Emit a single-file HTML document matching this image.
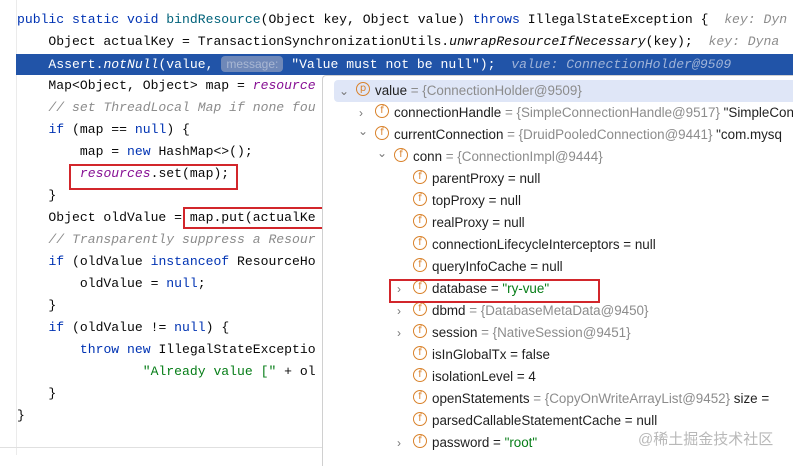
<!DOCTYPE html>
<html><head><meta charset="utf-8"><style>
body{margin:0;width:793px;height:455px;overflow:hidden;background:#fff;position:relative;font-family:"Liberation Mono",monospace}
.l{position:absolute;left:17px;height:22px;line-height:22px;font-size:13.1px;white-space:pre;color:#080808}
.k{color:#0033b3}.i{font-style:italic}.c{color:#8c8c8c;font-style:italic}.s{color:#067d17}.f{color:#871094;font-style:italic}
.h{color:#8c8c8c;font-style:italic}
.bar{position:absolute;left:16px;top:54px;width:777px;height:21px;background:#2154a8}
.box{position:absolute;border:2px solid #d2262b}
.pop{position:absolute;left:322px;top:75px;width:480px;height:390px;background:#fff;border-left:1px solid #d0d0d0;border-top:1px solid #d0d0d0;border-radius:4px 0 0 0;font-family:"Liberation Sans",sans-serif;font-size:13.4px;color:#1f1f1f}
.r{position:absolute;height:22px;line-height:22px;white-space:nowrap}
.ic{display:inline-block;box-sizing:border-box;width:14px;height:14px;border:1.3px solid #d9822b;border-radius:50%;color:#d9822b;font-family:"DejaVu Sans",sans-serif;font-size:10px;line-height:12px;text-align:center;vertical-align:middle;position:relative;top:-2px;margin-right:5px}
.g{color:#8c8c8c}.gs{color:#067d17}
.ar{position:absolute;color:#777;font-size:12px;height:22px;line-height:22px}
</style></head><body>
<div style="position:absolute;left:16px;top:0;width:1px;height:455px;background:#ebebeb"></div>
<div class="bar"></div>
<div class="l" style="top:9px"><span class="k">public static void</span> <span style="color:#00627a">bindResource</span>(Object key, Object value) <span class="k">throws</span> IllegalStateException {  <span class="h">key: Dyn</span></div>
<div class="l" style="top:31px">    Object actualKey = TransactionSynchronizationUtils.<span class="i">unwrapResourceIfNecessary</span>(key);  <span class="h">key: Dyna</span></div>
<div class="l" style="top:53px;color:#fff">    Assert.<span class="i">notNull</span>(value, <span style="background:#6f88b8;color:#a9b7d3;border-radius:4px;font-family:'Liberation Sans',sans-serif;font-size:12px;padding:1px 5px">message:</span> "Value must not be null");  <span class="i" style="color:#9fb3d8">value: ConnectionHolder@9509</span></div>
<div class="l" style="top:75px">    Map&lt;Object, Object&gt; map = <span class="f">resource</span></div>
<div class="l" style="top:97px"><span class="c">    // set ThreadLocal Map if none fou</span></div>
<div class="l" style="top:119px">    <span class="k">if</span> (map == <span class="k">null</span>) {</div>
<div class="l" style="top:141px">        map = <span class="k">new</span> HashMap&lt;&gt;();</div>
<div class="l" style="top:163px">        <span class="f">resources</span>.set(map);</div>
<div class="l" style="top:185px">    }</div>
<div class="l" style="top:207px">    Object oldValue = map.put(actualKe</div>
<div class="l" style="top:229px"><span class="c">    // Transparently suppress a Resour</span></div>
<div class="l" style="top:251px">    <span class="k">if</span> (oldValue <span class="k">instanceof</span> ResourceHo</div>
<div class="l" style="top:273px">        oldValue = <span class="k">null</span>;</div>
<div class="l" style="top:295px">    }</div>
<div class="l" style="top:317px">    <span class="k">if</span> (oldValue != <span class="k">null</span>) {</div>
<div class="l" style="top:339px">        <span class="k">throw new</span> IllegalStateExceptio</div>
<div class="l" style="top:361px">                <span class="s">"Already value ["</span> + ol</div>
<div class="l" style="top:383px">    }</div>
<div class="l" style="top:405px">}</div>
<div style="position:absolute;left:0;top:447px;width:322px;height:1px;background:#e0e0e0"></div>
<div class="box" style="left:69px;top:164px;width:165px;height:22px"></div>
<div class="box" style="left:183px;top:207px;width:146px;height:18px;border-right:none"></div>

<div class="pop">
<div style="position:absolute;left:11px;top:4px;width:470px;height:22px;background:#dfe6f7;border-radius:4px"></div>
<div class="ar" style="left:16px;top:4px">&#8964;</div>
<div class="r" style="left:33px;top:4px"><span class="ic">p</span>value <span class="g">= {ConnectionHolder@9509}</span></div>
<div class="ar" style="left:36px;top:26px">&#8250;</div>
<div class="r" style="left:52px;top:26px"><span class="ic">f</span>connectionHandle <span class="g">= {SimpleConnectionHandle@9517}</span> "SimpleCon</div>
<div class="ar" style="left:35px;top:44px">&#8964;</div>
<div class="r" style="left:52px;top:48px"><span class="ic">f</span>currentConnection <span class="g">= {DruidPooledConnection@9441}</span> "com.mysq</div>
<div class="ar" style="left:54px;top:66px">&#8964;</div>
<div class="r" style="left:71px;top:70px"><span class="ic">f</span>conn <span class="g">= {ConnectionImpl@9444}</span></div>
<div class="r" style="left:90px;top:92px"><span class="ic">f</span>parentProxy = null</div>
<div class="r" style="left:90px;top:114px"><span class="ic">f</span>topProxy = null</div>
<div class="r" style="left:90px;top:136px"><span class="ic">f</span>realProxy = null</div>
<div class="r" style="left:90px;top:158px"><span class="ic">f</span>connectionLifecycleInterceptors = null</div>
<div class="r" style="left:90px;top:180px"><span class="ic">f</span>queryInfoCache = null</div>
<div class="ar" style="left:74px;top:202px">&#8250;</div>
<div class="r" style="left:90px;top:202px"><span class="ic">f</span>database = <span class="gs">"ry-vue"</span></div>
<div class="ar" style="left:74px;top:224px">&#8250;</div>
<div class="r" style="left:90px;top:224px"><span class="ic">f</span>dbmd <span class="g">= {DatabaseMetaData@9450}</span></div>
<div class="ar" style="left:74px;top:246px">&#8250;</div>
<div class="r" style="left:90px;top:246px"><span class="ic">f</span>session <span class="g">= {NativeSession@9451}</span></div>
<div class="r" style="left:90px;top:268px"><span class="ic">f</span>isInGlobalTx = false</div>
<div class="r" style="left:90px;top:290px"><span class="ic">f</span>isolationLevel = 4</div>
<div class="r" style="left:90px;top:312px"><span class="ic">f</span>openStatements <span class="g">= {CopyOnWriteArrayList@9452}</span>  size =</div>
<div class="r" style="left:90px;top:334px"><span class="ic">f</span>parsedCallableStatementCache = null</div>
<div class="ar" style="left:74px;top:356px">&#8250;</div>
<div class="r" style="left:90px;top:356px"><span class="ic">f</span>password = <span class="gs">"root"</span></div>
</div>
<div class="box" style="left:389px;top:279px;width:207px;height:20px"></div>
<div style="position:absolute;left:638px;top:428px;font-family:'Liberation Sans','Noto Sans CJK SC',sans-serif;font-size:15px;color:#b8b8b8">@稀土掘金技术社区</div>
</body></html>
